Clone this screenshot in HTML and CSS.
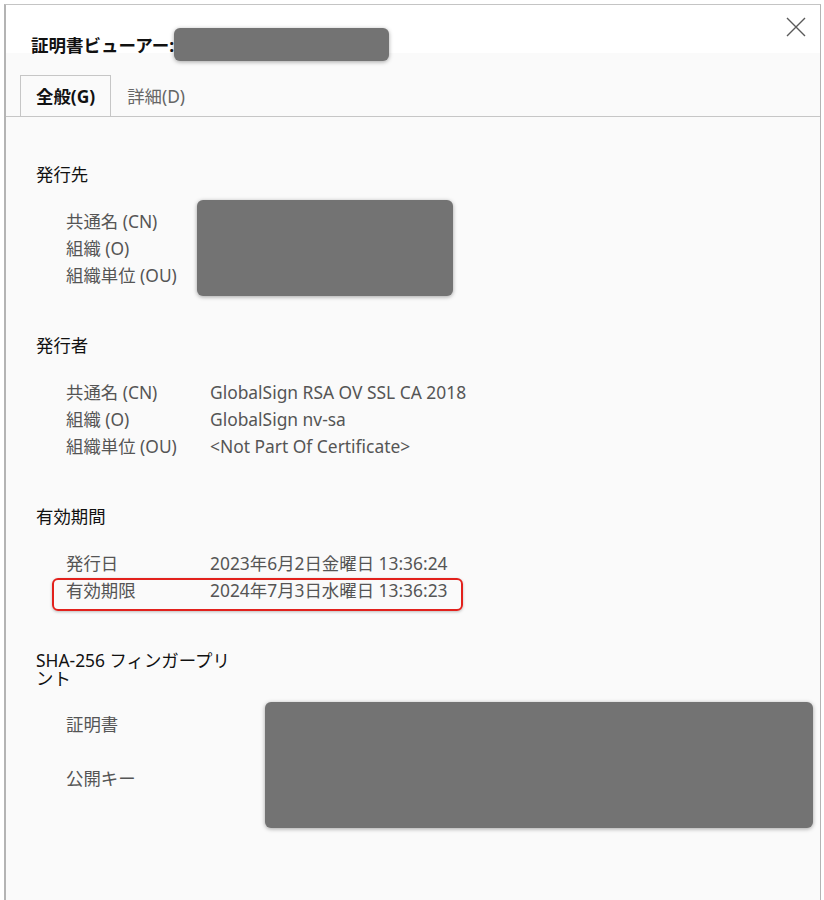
FILE: index.html
```html
<!DOCTYPE html>
<html lang="ja">
<head>
    <meta charset="UTF-8">
    <meta name="viewport" content="width=device-width, initial-scale=1.0">
    <title>証明書ビューアー</title>
    <link rel="stylesheet" href="styles.css">
</head>
<body>
    <div class="window">
        <div class="header">
            <div class="title-row">
                <h1>証明書ビューアー:</h1>
                <span class="redact redact-title"></span>
            </div>
            <button class="close" aria-label="閉じる">
                <svg width="20" height="20" viewBox="0 0 20 20">
                    <path d="M1 1 L19 19 M19 1 L1 19" stroke="#5a5a5a" stroke-width="1.4" fill="none"/>
                </svg>
            </button>
        </div>

        <div class="tabs">
            <div class="tab active">全般(G)</div>
            <div class="tab">詳細(D)</div>
        </div>

        <div class="content">
            <div class="section">
                <h2>発行先</h2>
                <div class="fields">
                    <div class="label">共通名 (CN)</div>
                    <div class="redact redact-subject"></div>
                    <div class="label">組織 (O)</div>
                    <div class="label">組織単位 (OU)</div>
                </div>
            </div>

            <div class="section">
                <h2>発行者</h2>
                <div class="fields">
                    <div class="label">共通名 (CN)</div>
                    <div class="value">GlobalSign RSA OV SSL CA 2018</div>
                    <div class="label">組織 (O)</div>
                    <div class="value">GlobalSign nv-sa</div>
                    <div class="label">組織単位 (OU)</div>
                    <div class="value">&lt;Not Part Of Certificate&gt;</div>
                </div>
            </div>

            <div class="section">
                <h2>有効期間</h2>
                <div class="fields">
                    <div class="label">発行日</div>
                    <div class="value">2023年6月2日金曜日 13:36:24</div>
                    <div class="label marked">有効期限<span class="highlight"></span></div>
                    <div class="value">2024年7月3日水曜日 13:36:23</div>
                </div>
            </div>

            <div class="section">
                <h2 class="narrow">SHA-256 フィンガープリント</h2>
                <div class="fingerprint">
                    <div class="fp-labels">
                        <div class="label">証明書</div>
                        <div class="label">公開キー</div>
                    </div>
                    <div class="redact redact-fp"></div>
                </div>
            </div>
        </div>
    </div>
</body>
</html>
```

FILE: styles.css
```css
body {
    margin: 0;
    background: white;
    font-family: "Noto Sans", "Noto Sans CJK JP", sans-serif;
    font-size: 17.4px;
    color: #111;
}
.window {
    margin: 4px 3px 0 4px;
    min-height: 896px;
    border-top: 1px solid #c4c4c4;
    border-left: 2px solid #b4b4b4;
    border-right: 1px solid #b4b4b4;
    background: #fafafa;
    box-sizing: border-box;
}
.header {
    display: flex;
    height: 48px;
    padding: 0 14px 0 25px;
    background: white;
}
.title-row {
    display: flex;
    align-items: center;
    height: 33px;
    margin-top: 23px;
}
h1 {
    margin: 0;
    font-size: 17.5px;
    font-weight: bold;
    color: #111;
}
.close {
    margin: 12px 0 0 auto;
    align-self: flex-start;
    padding: 0;
    border: none;
    background: none;
    width: 20px;
    height: 20px;
}
.redact {
    background: #737373;
    border-radius: 6px;
    box-shadow: 0 1px 4px rgba(0,0,0,0.35);
}
.redact-title {
    display: inline-block;
    width: 215px;
    height: 33px;
}
.tabs {
    display: flex;
    padding: 22px 0 0 14px;
    border-bottom: 1px solid #c6c6c6;
}
.tab {
    height: 40px;
    line-height: 40px;
    padding: 0 15px;
    color: #666;
    border: 1px solid transparent;
    border-bottom: none;
}
.tab.active {
    color: #111;
    font-weight: bold;
    border-color: #c6c6c6;
    background: #fafafa;
    margin-bottom: -1px;
}
.content {
    padding: 48px 0 0 30px;
}
.section {
    margin-bottom: 47px;
}
h2 {
    margin: 0 0 25px;
    font-size: 17.4px;
    font-weight: normal;
    line-height: 18px;
    color: #111;
}
h2.narrow {
    width: 202px;
    margin-bottom: 15px;
}
.fields {
    display: grid;
    grid-template-columns: 144px auto;
    justify-content: start;
    padding-left: 30px;
}
.label, .value {
    line-height: 27px;
    color: #555;
}
.label {
    grid-column: 1;
}
.value {
    grid-column: 2;
}
.redact-subject {
    grid-column: 2;
    grid-row: 1 / span 3;
    width: 256px;
    margin: -8px 0 -7px -13px;
}
.marked {
    position: relative;
}
.highlight {
    position: absolute;
    left: -14px;
    top: 1px;
    width: 407px;
    height: 29px;
    border: 2px solid #e2211c;
    border-radius: 6px;
    box-shadow: 0 1px 3px rgba(0,0,0,0.25);
}
.fingerprint {
    display: flex;
    padding-left: 30px;
}
.fp-labels {
    width: 199px;
    padding-top: 9px;
    display: flex;
    flex-direction: column;
    gap: 27px;
}
.redact-fp {
    width: 548px;
    height: 126px;
}
```
